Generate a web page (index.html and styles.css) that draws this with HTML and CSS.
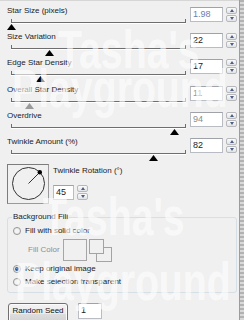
FILE: index.html
```html
<!DOCTYPE html>
<html>
<head>
<meta charset="utf-8">
<link rel="stylesheet" href="styles.css">
</head>
<body>
<div class="win">
  <div class="main">
    <div class="menu"><span>Edit</span><span>Filter</span><span>View</span><span>Settings</span><span>Help</span></div>
    <div class="content">
      <div class="row">
        <div class="ctl"><div class="lbl">Star Size (pixels)</div>
          <div class="slider"><div class="track"></div><svg class="thumb" style="left:0px" viewBox="0 0 9 6"><polygon points="4.5,0 9,6 0,6"/></svg></div></div>
        <div class="num"><div class="field blue">1.98</div><div class="spin"><i class="up"></i><i class="dn"></i></div></div>
      </div>
      <div class="row">
        <div class="ctl"><div class="lbl">Size Variation</div>
          <div class="slider"><div class="track"></div><svg class="thumb" style="left:38px" viewBox="0 0 9 6"><polygon points="4.5,0 9,6 0,6"/></svg></div></div>
        <div class="num"><div class="field">22</div><div class="spin"><i class="up"></i><i class="dn"></i></div></div>
      </div>
      <div class="row">
        <div class="ctl"><div class="lbl">Edge Star Density</div>
          <div class="slider"><div class="track"></div><svg class="thumb" style="left:29px" viewBox="0 0 9 6"><polygon points="4.5,0 9,6 0,6"/></svg></div></div>
        <div class="num"><div class="field">17</div><div class="spin"><i class="up"></i><i class="dn"></i></div></div>
      </div>
      <div class="row">
        <div class="ctl"><div class="lbl">Overall Star Density</div>
          <div class="slider"><div class="track"></div><svg class="thumb off" style="left:18px" viewBox="0 0 9 6"><polygon points="4.5,0 9,6 0,6"/></svg></div></div>
        <div class="num"><div class="field dim">11</div><div class="spin"><i class="up"></i><i class="dn"></i></div></div>
      </div>
      <div class="row">
        <div class="ctl"><div class="lbl">Overdrive</div>
          <div class="slider"><div class="track"></div><svg class="thumb" style="left:163px" viewBox="0 0 9 6"><polygon points="4.5,0 9,6 0,6"/></svg></div></div>
        <div class="num"><div class="field dim">94</div><div class="spin"><i class="up"></i><i class="dn"></i></div></div>
      </div>
      <div class="row">
        <div class="ctl"><div class="lbl">Twinkle Amount (%)</div>
          <div class="slider"><div class="track"></div><svg class="thumb" style="left:142px" viewBox="0 0 9 6"><polygon points="4.5,0 9,6 0,6"/></svg></div></div>
        <div class="num"><div class="field">82</div><div class="spin"><i class="up"></i><i class="dn"></i></div></div>
      </div>

      <div class="rot">
        <div class="dial">
          <svg width="40" height="38" viewBox="0 0 40 38">
            <circle cx="20.5" cy="18.5" r="16" fill="none" stroke="#333" stroke-width="1"/>
            <line x1="20.5" y1="18.5" x2="31.8" y2="7.2" stroke="#333" stroke-width="1"/>
            <circle cx="31.8" cy="7.2" r="2.2" fill="#000"/>
          </svg>
        </div>
        <div class="rot-side">
          <div class="lbl">Twinkle Rotation (°)</div>
          <div class="num small"><div class="field">45</div><div class="spin"><i class="up"></i><i class="dn"></i></div></div>
        </div>
      </div>

      <div class="group">
        <div class="legend">Background Fill</div>
        <div class="radio"><svg class="rb" viewBox="0 0 9 9"><circle cx="4.5" cy="4.5" r="4" fill="#e6e6e6" stroke="#8e8f8f"/><circle cx="4.5" cy="4.5" r="2.6" fill="#f4f4f4"/></svg><span>Fill with solid color</span></div>
        <div class="fillrow">
          <span class="fc">Fill Color</span>
          <div class="swatch"></div>
          <svg class="swap" width="24" height="24" viewBox="0 0 24 24">
            <rect x="7.5" y="8.5" width="15" height="14" fill="none" stroke="#a3a3a3"/>
            <rect x="0.5" y="0.5" width="14" height="14" fill="#f0f0f0" stroke="#a3a3a3"/>
          </svg>
        </div>
        <div class="radio r2"><svg class="rb" viewBox="0 0 9 9"><circle cx="4.5" cy="4.5" r="4" fill="#e6e6e6" stroke="#8e8f8f"/><circle cx="4.5" cy="4.5" r="2.2" fill="#1d4f97"/><circle cx="4" cy="4" r="0.8" fill="#6c9ad6"/></svg><span>Keep original image</span></div>
        <div class="radio r3"><svg class="rb" viewBox="0 0 9 9"><circle cx="4.5" cy="4.5" r="4" fill="#e6e6e6" stroke="#8e8f8f"/><circle cx="4.5" cy="4.5" r="2.6" fill="#f4f4f4"/></svg><span>Make selection transparent</span></div>
      </div>

      <div class="bottom">
        <div class="btn">Random Seed</div>
        <div class="field seed">1</div>
      </div>
    </div>
  </div>
  <div class="edge"></div>

  <div class="wm">
    <span class="w1">Tasha's</span>
    <span class="w2">Playground</span>
    <span class="w3">Tasha's</span>
    <span class="w4">Playground</span>
  </div>
</div>
</body>
</html>
```

FILE: styles.css
```css
* { box-sizing: border-box; }
html, body { margin: 0; padding: 0; }
body {
  width: 244px;
  height: 320px;
  overflow: hidden;
  background: #f0f0f0;
  font-family: "Liberation Sans", Arial, sans-serif;
  font-size: 8px;
  color: #222;
}
.win {
  position: relative;
  display: flex;
  width: 244px;
  height: 320px;
}
.main {
  width: 239px;
  display: flex;
  flex-direction: column;
}
.edge {
  width: 5px;
  border-left: 1px solid #9c9c9c;
  background: repeating-linear-gradient(180deg, #b2b2b2 0 2px, #d8d8d8 2px 4px);
}
.menu {
  height: 5px;
  overflow: hidden;
  border-bottom: 1px solid #d6d6d6;
  display: flex;
  gap: 12px;
  padding-left: 7px;
}
.menu span {
  line-height: 10px;
  margin-top: -6px;
}
.content {
  padding: 5px 0 0 7px;
}

/* slider rows */
.row {
  display: flex;
  height: 26.2px;
}
.ctl { width: 183px; }
.lbl {
  height: 10px;
  line-height: 10px;
  white-space: nowrap;
}
.slider {
  position: relative;
  height: 16px;
}
.track {
  margin: 3px 0 0 4px;
  width: 175px;
  height: 4px;
  border: 1px solid #6e6e6e;
  border-top: 0;
  box-shadow: 0 1px 0 #ffffff;
}
.thumb {
  position: absolute;
  top: 5px;
  width: 9px;
  height: 6px;
  fill: #000;
}
.thumb.off { fill: #9a9a9a; }

.num {
  display: flex;
  gap: 3px;
  margin-top: 1px;
  height: 15px;
}
.field {
  width: 33px;
  height: 15px;
  background: #fff;
  border: 1px solid #b9bcc2;
  border-top-color: #9fa2a8;
  font-size: 9px;
  line-height: 13px;
  padding-left: 2px;
  color: #222;
}
.field.blue { color: #6a7db0; }
.field.dim { color: #8c8c8c; }
.spin {
  width: 11px;
  display: flex;
  flex-direction: column;
  gap: 1px;
}
.spin i {
  flex: 1;
  border: 1px solid #b6b8bc;
  border-radius: 2px;
  background: linear-gradient(#fbfbfb, #e2e3e6);
  display: flex;
  align-items: center;
  justify-content: center;
}
.spin i::after {
  content: "";
  width: 0;
  height: 0;
  border-left: 2.5px solid transparent;
  border-right: 2.5px solid transparent;
}
.spin i.up::after { border-bottom: 3px solid #4c5f86; }
.spin i.dn::after { border-top: 3px solid #4c5f86; }

/* rotation */
.rot {
  display: flex;
  gap: 4px;
  height: 41px;
}
.dial {
  margin-top: 1px;
  width: 42px;
  height: 40px;
  border: 1px solid #9a9a9a;
  border-top-color: #7c7c7c;
  border-left-color: #7c7c7c;
}
.dial svg { display: block; }
.rot-side { padding-top: 3px; }
.num.small { margin-top: 9px; }
.num.small .field { width: 21px; }

/* group */
.group {
  margin-top: 13px;
  width: 230px;
  border: 1px solid #d5dfe5;
  border-radius: 3px;
  padding: 0 5px 5px;
}
.legend {
  width: max-content;
  margin: -6px 0 4px -1px;
  padding: 0 1px;
  background: #f0f0f0;
  line-height: 10px;
}
.radio {
  display: flex;
  align-items: center;
  gap: 4px;
  height: 10px;
  line-height: 10px;
}
.rb { width: 8px; height: 8px; }
.fillrow {
  display: flex;
  align-items: flex-start;
  margin-top: 3px;
  height: 23px;
  padding-left: 15px;
}
.fc {
  color: #8e8e8e;
  line-height: 10px;
  margin-top: 6px;
  width: 35px;
}
.swatch {
  width: 24px;
  height: 22px;
  border: 1px solid #a6a6a6;
}
.swap { margin-left: 2px; }
.radio.r2 { margin-top: 2px; }
.radio.r3 { margin-top: 3px; }

/* bottom */
.bottom {
  display: flex;
  gap: 10px;
  margin-top: 10px;
  padding-left: 1px;
}
.btn {
  width: 60px;
  height: 22px;
  border: 1px solid #707070;
  border-radius: 3px;
  background: linear-gradient(#f2f2f2 0, #ebebeb 50%, #dddddd 51%, #cfcfcf);
  box-shadow: inset 0 0 0 1px #fbfbfb;
  text-align: center;
  line-height: 10px;
  padding-top: 2px;
  color: #111;
}
.field.seed {
  width: 24px;
  height: 16px;
}

/* watermark */
.wm {
  position: absolute;
  left: 0;
  top: 0;
  width: 244px;
  height: 320px;
  pointer-events: none;
}
.wm span {
  position: absolute;
  font-family: "Liberation Sans", Arial, sans-serif;
  font-weight: bold;
  font-size: 53px;
  line-height: 53px;
  color: rgba(255, 255, 255, 0.62);
  transform: scaleX(0.74);
  transform-origin: 0 0;
  white-space: nowrap;
}
.w1 { left: 58px; top: 23px; }
.w2 { left: 12px; top: 62px; }
.w3 { left: 43px; top: 190px; }
.w4 { left: 15px; top: 255px; }
```
